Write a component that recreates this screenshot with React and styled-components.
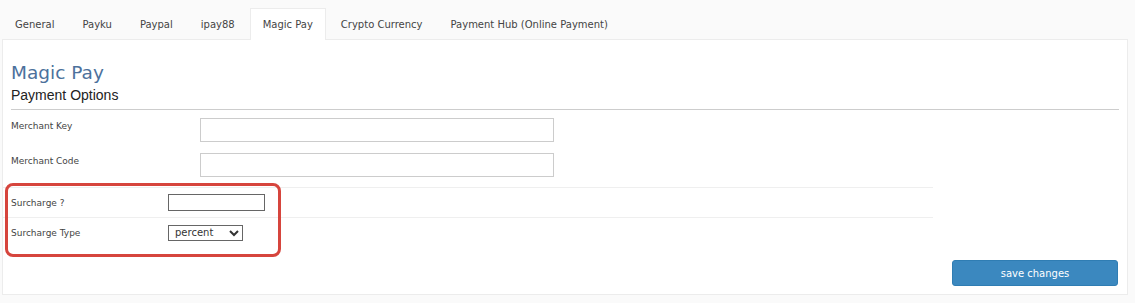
import React, { useState } from 'react'
import styled, { createGlobalStyle } from 'styled-components'

const GlobalStyle = createGlobalStyle`
  html, body {
    margin: 0;
    padding: 0;
    background: #fafafa;
  }
  body {
    font-family: "DejaVu Sans", "Noto Sans", sans-serif;
    color: #333;
  }
`

const tabs = ['General', 'Payku', 'Paypal', 'ipay88', 'Magic Pay', 'Crypto Currency', 'Payment Hub (Online Payment)']

export default function App() {
  const [active, setActive] = useState('Magic Pay')

  return (
    <>
      <GlobalStyle />
      <Page>
        <TabBar>
          {tabs.map(tab => (
            <Tab key={tab} $active={tab === active} onClick={() => setActive(tab)}>{tab}</Tab>
          ))}
        </TabBar>

        <Panel>
          <Title>Magic Pay</Title>
          <Subtitle>Payment Options</Subtitle>

          <WideRow $gap={8}>
            <Label>Merchant Key</Label>
            <TextInput />
          </WideRow>
          <WideRow $gap={11}>
            <Label>Merchant Code</Label>
            <TextInput />
          </WideRow>

          <Highlighted>
            <SmallRow>
              <SmallLabel>Surcharge ?</SmallLabel>
              <SmallInput />
            </SmallRow>
            <SmallRow>
              <SmallLabel>Surcharge Type</SmallLabel>
              <Select defaultValue="percent">
                <option value="percent">percent</option>
                <option value="fixed">fixed</option>
              </Select>
            </SmallRow>
            <Marker />
          </Highlighted>

          <Actions>
            <SaveButton>save changes</SaveButton>
          </Actions>
        </Panel>
      </Page>
    </>
  )
}

const Page = styled.div`
  padding: 8px 7px 0 2px;
`

const TabBar = styled.div`
  display: flex;
  height: 31px;
`

const Tab = styled.div`
  display: flex;
  align-items: center;
  padding: 0 12px;
  margin-right: 2px;
  font-size: 10px;
  color: #444;
  cursor: pointer;
  border: 1px solid ${p => p.$active ? '#ececec' : 'transparent'};
  border-bottom: none;
  background: ${p => p.$active ? '#fff' : 'transparent'};
  position: relative;
  z-index: 1;
  margin-bottom: -1px;
`

const Panel = styled.div`
  background: #fff;
  border: 1px solid #ececec;
  height: 256px;
  box-sizing: border-box;
  padding: 21px 8px 0 8px;
`

const Title = styled.h2`
  margin: 0;
  font-size: 18.5px;
  font-weight: 400;
  color: #4c719c;
  line-height: 24px;
`

const Subtitle = styled.h3`
  margin: 0;
  font-family: "Liberation Sans", Arial, sans-serif;
  font-weight: 400;
  font-size: 14px;
  color: #222;
  line-height: 20px;
  padding-bottom: 4px;
  border-bottom: 1px solid #cdcdcd;
`

const WideRow = styled.div`
  display: grid;
  grid-template-columns: 189px 354px;
  align-items: start;
  margin-top: ${p => p.$gap}px;
`

const Label = styled.label`
  font-size: 9px;
  color: #444;
  padding-top: 3px;
`

const TextInput = styled.input`
  height: 24px;
  box-sizing: border-box;
  border: 1px solid #ccc;
  margin: 0;
`

const Highlighted = styled.div`
  position: relative;
  width: 930px;
  margin-left: -8px;
  margin-top: 10px;
`

const SmallRow = styled.div`
  display: grid;
  grid-template-columns: 157px auto;
  align-items: center;
  height: 29px;
  padding-left: 8px;
  border-top: 1px solid #efefef;
`

const SmallLabel = styled.label`
  font-size: 9px;
  color: #444;
`

const SmallInput = styled.input`
  width: 97px;
  height: 17px;
  box-sizing: border-box;
  border: 1px solid #666;
  margin: 0;
`

const Select = styled.select`
  width: 75px;
  height: 16px;
  box-sizing: border-box;
  border: 1px solid #666;
  border-radius: 0;
  background: #fff;
  font-size: 10px;
  padding: 0 2px;
  margin: 0;
  font-family: "DejaVu Sans", sans-serif;
  color: #333;
`

const Marker = styled.div`
  position: absolute;
  left: 2px;
  top: -4px;
  width: 276px;
  height: 74px;
  box-sizing: border-box;
  border: 3px solid #d6453d;
  border-radius: 8px;
  pointer-events: none;
`

const Actions = styled.div`
  display: flex;
  justify-content: flex-end;
  padding-right: 1px;
  margin-top: 13px;
`

const SaveButton = styled.button`
  width: 166px;
  height: 26px;
  border: 1px solid #2f7db3;
  border-radius: 3px;
  background: #3b88bf;
  color: #fff;
  font-family: "DejaVu Sans", sans-serif;
  font-size: 10px;
  cursor: pointer;
`
